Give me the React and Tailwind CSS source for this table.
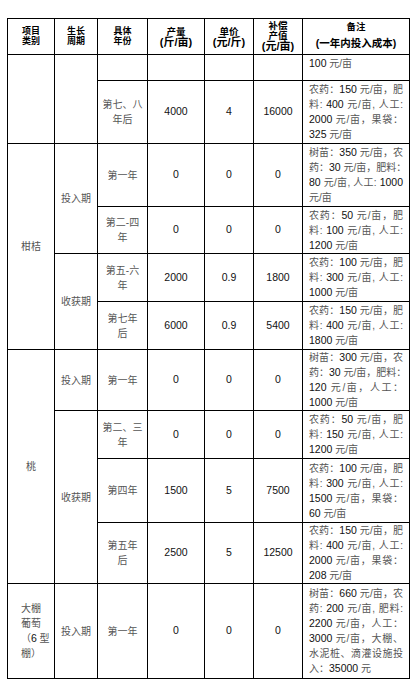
import React from 'react'

const cell = 'border-r border-b border-black flex items-center justify-center text-center'

// digits in dark, everything else (CJK, punctuation) in grey like the PDF
function Tx({ s }) {
  const parts = s.split(/([0-9.]+)/)
  return parts.map((p, i) =>
    /^[0-9.]+$/.test(p)
      ? <span key={i} className="text-[#111] text-[10.5px]">{p}</span>
      : <span key={i}>{p}</span>
  )
}

function Lines({ lines }) {
  return (
    <div className="flex flex-col items-center leading-[15px] text-[10px] text-[#555]">
      {lines.map((l, i) => <div key={i} className="whitespace-nowrap"><Tx s={l} /></div>)}
    </div>
  )
}

function Note({ lines, top }) {
  return (
    <div className={`border-r border-b border-black flex flex-col ${top ? 'justify-start pt-[1px]' : 'justify-center'} px-[6px] leading-[15px] text-[10px] text-[#555]`}>
      {lines.map((l, i) => (
        <div
          key={i}
          className={`whitespace-nowrap ${i < lines.length - 1 ? 'text-justify [text-align-last:justify]' : 'text-left'}`}
        >
          <Tx s={l} />
        </div>
      ))}
    </div>
  )
}

function Num({ v }) {
  return <div className={`${cell} text-[10.5px] text-[#111]`}>{v}</div>
}

function Head({ lines, pt }) {
  return (
    <div className={`border-r border-b border-black flex flex-col items-center justify-start font-bold text-black ${pt}`}>
      {lines.map(([t, c], i) => <div key={i} className={`whitespace-nowrap ${c}`}>{t}</div>)}
    </div>
  )
}

function Row({ year, out, price, value, note }) {
  return (
    <>
      <div className={cell}><Lines lines={year} /></div>
      <Num v={out} />
      <Num v={price} />
      <Num v={value} />
      <Note lines={note} />
    </>
  )
}

export default function App() {
  const small = 'text-[9px] leading-[10px]'
  const cjk = 'text-[9.5px] leading-[10px]'
  const unit = 'text-[11px] leading-[11px]'
  return (
    <div className="bg-white min-h-[690px] w-[416px] pt-[18px] pl-[7px] font-['Liberation_Sans','Noto_Sans_CJK_SC',sans-serif]">
      <div className="grid w-max grid-cols-[47px_43px_50px_57px_49px_49px_107px] grid-rows-[36px_26px_63px_63px_47px_48px_48px_61px_48px_64px_61px_95px] border-l border-t border-black">
        {/* header */}
        <Head pt="pt-[7px]" lines={[['项目', small], ['类别', small]]} />
        <Head pt="pt-[7px]" lines={[['生长', small], ['周期', small]]} />
        <Head pt="pt-[7px]" lines={[['具体', small], ['年份', small]]} />
        <Head pt="pt-[8px]" lines={[['产量', cjk], ['(斤/亩)', unit]]} />
        <Head pt="pt-[8px]" lines={[['单价', cjk], ['(元/斤)', unit]]} />
        <Head pt="pt-[2px]" lines={[['补偿', cjk], ['产值', cjk], ['(元/亩)', unit]]} />
        <Head pt="pt-[3px]" lines={[['备注', cjk], ['(一年内投入成本)', 'text-[10.5px] leading-[11px] mt-[6px]']]} />

        {/* continuation of previous crop */}
        <div className={`${cell} row-span-2`} />
        <div className={`${cell} row-span-2`} />
        <div className={cell} />
        <div className={cell} />
        <div className={cell} />
        <div className={cell} />
        <Note top lines={['100 元/亩']} />

        <Row year={['第七、八', '年后']} out="4000" price="4" value="16000"
          note={['农药：150 元/亩，肥', '料: 400 元/亩, 人工:', '2000 元/亩，果袋：', '325 元/亩']} />

        {/* 柑桔 */}
        <div className={`${cell} row-span-4`}><Lines lines={['柑桔']} /></div>
        <div className={`${cell} row-span-2`}><Lines lines={['投入期']} /></div>
        <Row year={['第一年']} out="0" price="0" value="0"
          note={['树苗：350 元/亩，农', '药：30 元/亩，肥料：', '80 元/亩, 人工: 1000', '元/亩']} />
        <Row year={['第二-四', '年']} out="0" price="0" value="0"
          note={['农药：50 元/亩，肥', '料: 100 元/亩, 人工:', '1200 元/亩']} />
        <div className={`${cell} row-span-2`}><Lines lines={['收获期']} /></div>
        <Row year={['第五-六', '年']} out="2000" price="0.9" value="1800"
          note={['农药：100 元/亩，肥', '料: 300 元/亩, 人工:', '1000 元/亩']} />
        <Row year={['第七年', '后']} out="6000" price="0.9" value="5400"
          note={['农药：150 元/亩，肥', '料: 400 元/亩, 人工:', '1800 元/亩']} />

        {/* 桃 */}
        <div className={`${cell} row-span-4`}><Lines lines={['桃']} /></div>
        <div className={cell}><Lines lines={['投入期']} /></div>
        <Row year={['第一年']} out="0" price="0" value="0"
          note={['树苗：300 元/亩，农', '药：30 元/亩，肥料：', '120 元/亩，人工：', '1000 元/亩']} />
        <div className={`${cell} row-span-3`}><Lines lines={['收获期']} /></div>
        <Row year={['第二、三', '年']} out="0" price="0" value="0"
          note={['农药：50 元/亩，肥', '料: 150 元/亩, 人工:', '1200 元/亩']} />
        <Row year={['第四年']} out="1500" price="5" value="7500"
          note={['农药：100 元/亩，肥', '料: 300 元/亩, 人工:', '1500 元/亩，果袋：', '60 元/亩']} />
        <Row year={['第五年', '后']} out="2500" price="5" value="12500"
          note={['农药：150 元/亩，肥', '料: 400 元/亩, 人工:', '2000 元/亩，果袋：', '208 元/亩']} />

        {/* 大棚葡萄 */}
        <div className="border-r border-b border-black flex flex-col justify-center pl-[13px] leading-[15px] text-[10px] text-[#555]">
          <div>大棚</div>
          <div>葡萄</div>
          <div>（<span className="text-[#111] text-[10.5px]">6</span> 型</div>
          <div>棚）</div>
        </div>
        <div className={cell}><Lines lines={['投入期']} /></div>
        <Row year={['第一年']} out="0" price="0" value="0"
          note={['树苗：660 元/亩，农', '药: 200 元/亩, 肥料:', '2200 元/亩，人工：', '3000 元/亩，大棚、', '水泥桩、滴灌设施投', '入：35000 元']} />
      </div>
    </div>
  )
}
